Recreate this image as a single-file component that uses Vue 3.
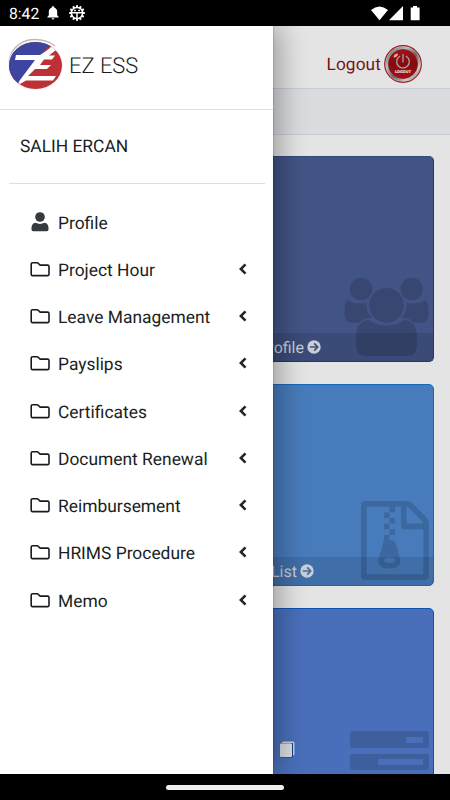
<script setup>
const items = ['Project Hour', 'Leave Management', 'Payslips', 'Certificates', 'Document Renewal', 'Reimbursement', 'HRIMS Procedure', 'Memo']
const teeth = Array.from({ length: 12 }, (_, i) => i * 30)
</script>

<template>
  <div class="phone">
    <header class="status">
      <span class="time">8:42</span>
      <svg class="bell" width="12" height="14" viewBox="0 0 12 14"><path d="M6 0.2c.8 0 1.2.5 1.2 1.2C9.300 2 10.200 3.700 10.200 5.700V9.300L11.700 10.900V11.500H.3V10.900L1.800 9.300V5.700C1.800 3.700 2.800 2 4.800 1.400 4.800.7 5.200.2 6 .2zM4.600 12.200H7.400A1.400 1.400 0 0 1 4.600 12.200z" fill="#fff" /></svg>
      <svg class="gear" width="16" height="16" viewBox="-8 -8 16 16">
        <rect v-for="a in teeth" :key="a" x="-1" y="-7.800" width="2" height="2.400" fill="#fff" :transform="`rotate(${a})`" />
        <circle r="5.600" fill="none" stroke="#fff" stroke-width="1.500" />
        <path d="M-5.500-.2H5.500M0 0V5.500" stroke="#fff" stroke-width="1.500" />
        <path d="M-3-2.500H-1.200M1.200-2.500H3" stroke="#fff" stroke-width="1.300" />
      </svg>
      <span class="grow"></span>
      <svg width="50" height="15" viewBox="0 0 50 15" fill="#fff">
        <path d="M0 4Q8.500-3.200 17 4L8.500 14.300z" /><path d="M32 0V14.300H18z" />
        <path d="M42 0h4v1.500h2.600V14.300H39.700V1.500H42z" />
      </svg>
    </header>

    <div class="screen">
      <main class="page">
        <div class="topbar">
          <span class="logout">Logout</span>
          <svg class="power" width="38" height="38" viewBox="0 0 38 38">
            <defs>
              <linearGradient id="metal" x1="0" y1="0" x2="1" y2="1"><stop offset="0" stop-color="#666" /><stop offset=".3" stop-color="#bbb" /><stop offset=".55" stop-color="#666" /><stop offset=".8" stop-color="#ccc" /><stop offset="1" stop-color="#666" /></linearGradient>
              <linearGradient id="red" x1="0" y1="0" x2="0" y2="1"><stop offset="0" stop-color="#a51217" /><stop offset=".5" stop-color="#800b10" /><stop offset="1" stop-color="#b00c12" /></linearGradient>
            </defs>
            <circle cx="19" cy="19" r="18.300" fill="#ccc" stroke="#a21820" stroke-width="1.200" />
            <circle cx="19" cy="19" r="15.900" fill="none" stroke="url(#metal)" stroke-width="2.800" />
            <circle cx="19" cy="19" r="14.600" fill="url(#red)" stroke="#761318" stroke-width=".6" />
            <ellipse cx="11.800" cy="10.500" rx="2.700" ry="1.300" fill="#e9a5a5" transform="rotate(-40 11.800 10.500)" />
            <path d="M15.800 11.300A6.300 6.300 0 1 0 22.200 11.300M19 9.300V17" fill="none" stroke="#aaa0a0" stroke-width="1.300" stroke-linecap="round" />
            <text x="19" y="28" text-anchor="middle" textLength="16" lengthAdjust="spacingAndGlyphs" class="tiny">LOGOUT</text>
          </svg>
        </div>
        <div class="crumb"></div>
        <div class="cards">
          <section class="card navy">
            <svg class="art people" width="86" height="80" viewBox="0 0 86 80">
              <circle cx="17" cy="12" r="11.200" /><circle cx="67.800" cy="12" r="11.200" /><circle cx="42.500" cy="28.500" r="17.400" />
              <path d="M4 23Q8 26.500 17 26.500Q21 26.500 22.800 25.500Q21.500 35 28 41.200Q20 40.500 15.500 45.500H7Q.5 45 .5 38V33Q.5 25 4 23zM81 23Q77 26.500 68 26.500Q64 26.500 62.200 25.500Q63.500 35 57 41.200Q65 40.500 69.500 45.500H78Q84.500 45 84.500 38V33Q84.500 25 81 23z" />
              <path d="M25 43Q33 48.500 42.500 48.500T60 43Q73 43.500 73 61V69Q73 79 63 79H22Q12 79 12 69V61Q12 43.500 25 43z" />
            </svg>
            <div class="foot">Profile <svg class="arrow" width="14" height="14" viewBox="0 0 14 14"><circle cx="7" cy="7" r="6.700" /><path d="M2.800 7H10.500M7.200 3.400L10.700 7L7.200 10.600" /></svg></div>
          </section>
          <section class="card blue">
            <svg class="art zip" width="68" height="79" viewBox="0 0 68 79">
              <path fill-rule="evenodd" d="M4 0H46Q49 0 51 2L65 16Q68 19 68 22V75Q68 79 64 79H4Q0 79 0 75V4Q0 0 4 0zM5.700 5.700V73.300H62.300V28.300H44Q40 28.300 40 24V5.700H34V11.300H28.500V5.700zM45.500 6V22.600H62Q61.500 20.500 60.200 19.200L49 8Q47.500 6.500 45.500 6z" />
              <path d="M23 11.500h5.500V17H23zM28.500 17H34v5.600H28.500zM23 22.600h5.500V28.300H23zM28.500 28.300H34V34H28.500z" />
              <path fill-rule="evenodd" d="M23 34H28.500V39.500H32Q34 39.500 34.600 42L39 57Q41 67.500 28.500 67.500Q16 67.500 17.500 58L23 39zM28.500 56.500C21 56.500 21 62 28.500 62S36 56.500 28.500 56.500z" />
            </svg>
            <div class="foot list">List <svg class="arrow" width="14" height="14" viewBox="0 0 14 14"><circle cx="7" cy="7" r="6.700" /><path d="M2.800 7H10.500M7.200 3.400L10.700 7L7.200 10.600" /></svg></div>
          </section>
          <section class="card royal">
            <svg class="art server" width="79" height="40" viewBox="0 0 79 40"><path fill-rule="evenodd" d="M3 0H76Q79 0 79 3V14Q79 17 76 17H3Q0 17 0 14V3Q0 0 3 0zM56 6V12H73V6zM3 23H76Q79 23 79 26V36Q79 39 76 39H3Q0 39 0 36V26Q0 23 3 23zM28 28V34H73V28z" /></svg>
            <svg class="copy" width="15" height="17" viewBox="0 0 15 17"><path d="M2 1.500Q2 .5 3.500 .5H13Q14.500 .5 14.500 2V13.500Q14.500 14.500 13 14.500V2H2z" fill="#c8d0df" /><path d="M12.500 2V16H1" fill="none" stroke="#0b449b" /><rect y="2.500" width="12" height="13.500" rx="1.200" fill="#dcdddf" /></svg>
          </section>
        </div>
      </main>

      <aside class="drawer">
        <div class="brand">
          <svg class="logo" width="56" height="54" viewBox="0 0 56 54">
            <defs><clipPath id="disc"><ellipse cx="27.500" cy="27.500" rx="26.500" ry="23.500" /></clipPath></defs>
            <path d="M1 23C4 8 15 1.500 27 1.500C34 1.500 41 3 47 8" fill="none" stroke="#bbb" stroke-width="1.300" />
            <ellipse cx="27.500" cy="27.500" rx="27.300" ry="24.500" fill="#f8f2f5" />
            <g clip-path="url(#disc)"><path d="M0 0H56V54H0z" fill="#bd3036" /><path d="M0 0H52L39 10L22 29L11 48L0 54z" fill="#3e45a0" />
              <path d="M8 17H32Q42 11 48 4L53 9Q46 13 41 17.500H47L44 21.500H36L32 27H43L39 31H27L20 38H48L45 42.500H18L12 46Q9 46 12 42L27 22H7z" fill="#fff" />
            </g>
          </svg>
          <span class="brand-name">EZ ESS</span>
        </div>
        <div class="user">SALIH ERCAN</div>
        <nav class="menu">
          <a class="row"><svg class="ico" width="20" height="20" viewBox="0 0 20 20"><circle cx="10" cy="5" r="4.800" fill="#343a40" /><path d="M5.500 10.800Q10 13 14.500 10.800Q18.500 11.500 18.500 16V17.500Q18.500 19.200 16.800 19.200H3.200Q1.500 19.200 1.500 17.500V16Q1.500 11.500 5.500 10.800z" fill="#343a40" /></svg><span class="label">Profile</span></a>
          <a v-for="item in items" :key="item" class="row">
            <svg class="ico" width="20" height="20" viewBox="0 0 20 20"><path d="M2.600 3.700H7.500L10.200 6.100H17.500Q19 6.100 19 7.500V15.200Q19 16.600 17.500 16.600H2.600Q1.200 16.600 1.200 15.200V5.100Q1.200 3.700 2.600 3.700z" fill="none" stroke="#171b1f" stroke-width="1.600" /></svg>
            <span class="label">{{ item }}</span>
            <svg class="chev" width="8" height="12" viewBox="0 0 8 12"><path d="M6.500 1.300L1.800 6L6.500 10.700" fill="none" stroke="#212529" stroke-width="2.500" /></svg>
          </a>
        </nav>
      </aside>
    </div>
    <footer class="navbar"><span class="pill"></span></footer>
  </div>
</template>

<style>
body { margin: 0; overflow: hidden; }
</style>

<style scoped>
* { box-sizing: border-box; }
svg { display: block; flex: none; }
.phone { width: 450px; height: 800px; display: flex; flex-direction: column; overflow: hidden; font-family: Roboto, sans-serif; color: #1a1e22; text-rendering: geometricPrecision; }
.status { height: 26px; flex: none; background: #000; color: #fff; display: flex; align-items: center; padding: 0 29px 0 9px; }
.time { font-size: 15.7px; width: 38px; line-height: 26px; padding-top: 2px; }
.gear { margin-left: 10px; }
.grow { flex: 1; }
.screen { position: relative; height: 748px; overflow: hidden; background: #e4e4e4; }
.topbar { height: 62px; display: flex; justify-content: flex-end; align-items: center; padding: 14px 28px 0 0; gap: 3px; }
.logout { color: #741419; font-size: 17.3px; padding-top: 1px; letter-spacing: .1px; }
.tiny { font-size: 4px; font-weight: 900; fill: #eee; }
.crumb { height: 47px; background: #dadbdf; border-top: 1px solid #c5cbd1; border-bottom: 1px solid #c8cdd2; }
.cards { padding: 21px 16px 0; display: flex; flex-direction: column; gap: 22px; }
.card { position: relative; border-radius: 5px; overflow: hidden; display: flex; flex-direction: column; justify-content: flex-end; flex: none; }
.navy { height: 206px; background: #415485; border: 1px solid #1b397a; border-top-color: #304b80; }
.blue { height: 202px; background: #487bbb; border: 1px solid #1668b9; }
.royal { height: 210px; background: #496fba; border: 1px solid #1051b0; }
.art { position: absolute; fill: rgba(0, 0, 0, .15); }
.people { right: 3px; bottom: 4px; }
.zip { right: 4px; bottom: 5px; }
.server { right: 4px; top: 122px; }
.copy { position: absolute; left: 263px; top: 132px; }
.foot { height: 28px; background: rgba(0, 0, 0, .1); color: #c8ccd5; display: flex; justify-content: flex-end; align-items: center; gap: 3px; padding-right: 112px; font-size: 16px; }
.list { padding-right: 119px; }
.arrow { fill: #c9cdd5; }
.arrow path { fill: none; stroke: #3c517f; stroke-width: 1.7; }
.list .arrow path { stroke: #426fa7; }
.drawer { position: absolute; left: 0; top: 0; width: 273px; height: 748px; background: #fff; box-shadow: 0 0 2px rgba(0, 0, 0, .35), 9px 0 24px rgba(0, 0, 0, .28); }
.brand { height: 84px; border-bottom: 1px solid #dee2e6; display: flex; align-items: center; gap: 5px; padding: 0 8px 5px; font-size: 21.9px; font-weight: 300; }
.brand-name { padding-top: 2px; }
.user { margin: 0 8px 0 9px; height: 74px; border-bottom: 1px solid #dcdfe2; padding: 1px 0 0 11px; line-height: 73px; font-size: 17.4px; }
.menu { padding: 15px 26px 0 30px; }
.row { height: 47.25px; display: flex; align-items: center; font-size: 17.4px; }
.label { flex: 1; padding: 2px 0 0 8px; }
.ico { margin-top: -2px; }
.chev { margin-top: -2px; }
.navbar { height: 26px; background: #000; display: flex; align-items: center; justify-content: center; }
.pill { width: 118px; height: 5px; border-radius: 3px; background: #eee; }
</style>
